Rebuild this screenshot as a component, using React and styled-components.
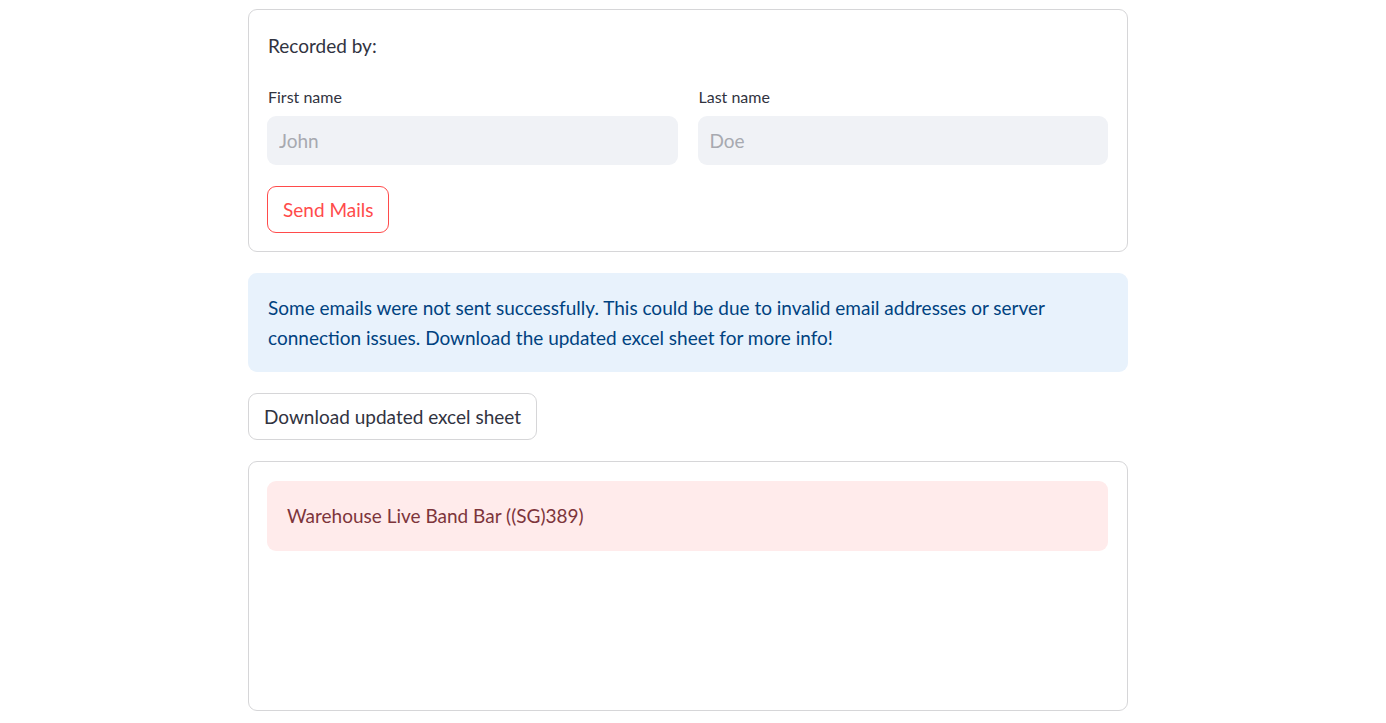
import styled, { createGlobalStyle } from "styled-components";

const GlobalStyle = createGlobalStyle`
  body {
    margin: 0;
    background: #ffffff;
    font-family: "Lato", "Noto Sans", sans-serif;
    color: #31333f;
  }
`;

const Page = styled.main`
  width: 880px;
  margin: 0 auto;
  padding: 9px 10px 0 0;
  display: flex;
  flex-direction: column;
  gap: 21px;
`;

const Card = styled.section`
  border: 1px solid #d6d6d8;
  border-radius: 9px;
  padding: 19px 19px 18px 18px;
  display: flex;
  flex-direction: column;
  min-height: ${(p) => p.$minHeight || "auto"};
  box-sizing: border-box;
`;

const Heading = styled.p`
  margin: 4px 0 28px 1px;
  font-size: 19px;
  line-height: 26px;
`;

const FieldRow = styled.div`
  display: grid;
  grid-template-columns: 1fr 1fr;
  gap: 20px;
`;

const Field = styled.label`
  display: flex;
  flex-direction: column;
  gap: 9px;
  font-size: 16px;
  line-height: 20px;
  & > span {
    padding-left: 1px;
  }
`;

const Input = styled.input`
  height: 49px;
  border: none;
  border-radius: 9px;
  background: #f0f2f6;
  padding: 0 12px;
  font-family: inherit;
  font-size: 19px;
  color: #31333f;
  outline: none;
  &::placeholder {
    color: #a7a9b0;
  }
`;

const Button = styled.button`
  align-self: flex-start;
  height: 47px;
  padding: 0 15px;
  border-radius: 9px;
  background: #ffffff;
  font-family: inherit;
  font-size: 19px;
  border: 1px solid ${(p) => (p.$danger ? "#ff4b4b" : "#d6d6d8")};
  color: ${(p) => (p.$danger ? "#ff4b4b" : "#31333f")};
  margin-top: ${(p) => (p.$danger ? "21px" : "0")};
  cursor: pointer;
`;

const Alert = styled.div`
  border-radius: 9px;
  padding: ${(p) => p.$pad};
  font-size: 19px;
  line-height: 30px;
  background: ${(p) => (p.$kind === "error" ? "#ffebeb" : "#e8f2fc")};
  color: ${(p) => (p.$kind === "error" ? "#7d353b" : "#004280")};
`;

export default function App() {
  return (
    <>
      <GlobalStyle />
      <Page>
        <Card>
          <Heading>Recorded by:</Heading>
          <FieldRow>
            <Field>
              <span>First name</span>
              <Input placeholder="John" />
            </Field>
            <Field>
              <span>Last name</span>
              <Input placeholder="Doe" />
            </Field>
          </FieldRow>
          <Button $danger>Send Mails</Button>
        </Card>

        <Alert $pad="20px 20px 19px">
          Some emails were not sent successfully. This could be due to invalid
          email addresses or server connection issues. Download the updated
          excel sheet for more info!
        </Alert>

        <Button>Download updated excel sheet</Button>

        <Card $minHeight="250px">
          <Alert $kind="error" $pad="20px 20px">
            Warehouse Live Band Bar ((SG)389)
          </Alert>
        </Card>
      </Page>
    </>
  );
}
